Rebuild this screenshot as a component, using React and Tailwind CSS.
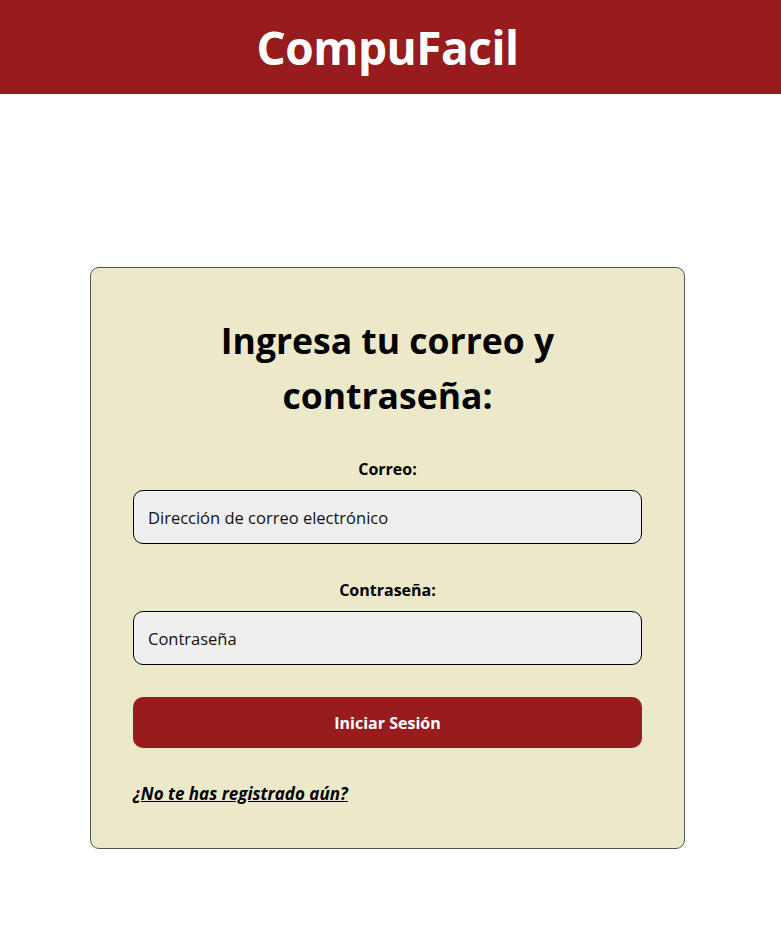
export default function App() {
  return (
    <div className="min-h-[926px] bg-white" style={{ fontFamily: '"Open Sans", "Noto Sans", sans-serif' }}>
      <header className="flex h-[94px] items-center justify-center bg-[#981b1e] pr-[6px]">
        <h1 className="text-[46px] font-bold leading-none tracking-[-0.5px] text-white">CompuFacil</h1>
      </header>
      <main className="pt-[173px] pb-[77px]">
        <div className="ml-[90px] w-[595px] rounded-[9px] border border-[#555] bg-[#ece9ca] px-[42px] pt-[45px] pb-[43px]">
          <h2 className="text-center text-[35.5px] font-bold leading-[55px] text-black">
            Ingresa tu correo y<br />contraseña:
          </h2>
          <form className="mt-[35px] flex flex-col" onSubmit={(e) => e.preventDefault()}>
            <label className="mb-[10px] text-center text-[16px] font-bold leading-[22px] text-black">Correo:</label>
            <input
              type="email"
              placeholder="Dirección de correo electrónico"
              className="h-[54px] w-full rounded-[10px] border border-black bg-[#efefef] px-[14px] text-[16.5px] text-black placeholder:text-[#111]"
            />
            <label className="mt-[35px] mb-[10px] text-center text-[16px] font-bold leading-[22px] text-black">Contraseña:</label>
            <input
              type="password"
              placeholder="Contraseña"
              className="h-[54px] w-full rounded-[10px] border border-black bg-[#efefef] px-[14px] text-[16.5px] text-black placeholder:text-[#111]"
            />
            <button
              type="submit"
              className="mt-[32px] h-[51px] w-full rounded-[10px] bg-[#981b1e] text-[16px] font-bold text-white"
            >
              Iniciar Sesión
            </button>
            <a href="#" className="mt-[35px] self-start text-[17px] font-bold italic leading-[22px] text-black underline">
              ¿No te has registrado aún?
            </a>
          </form>
        </div>
      </main>
    </div>
  );
}
